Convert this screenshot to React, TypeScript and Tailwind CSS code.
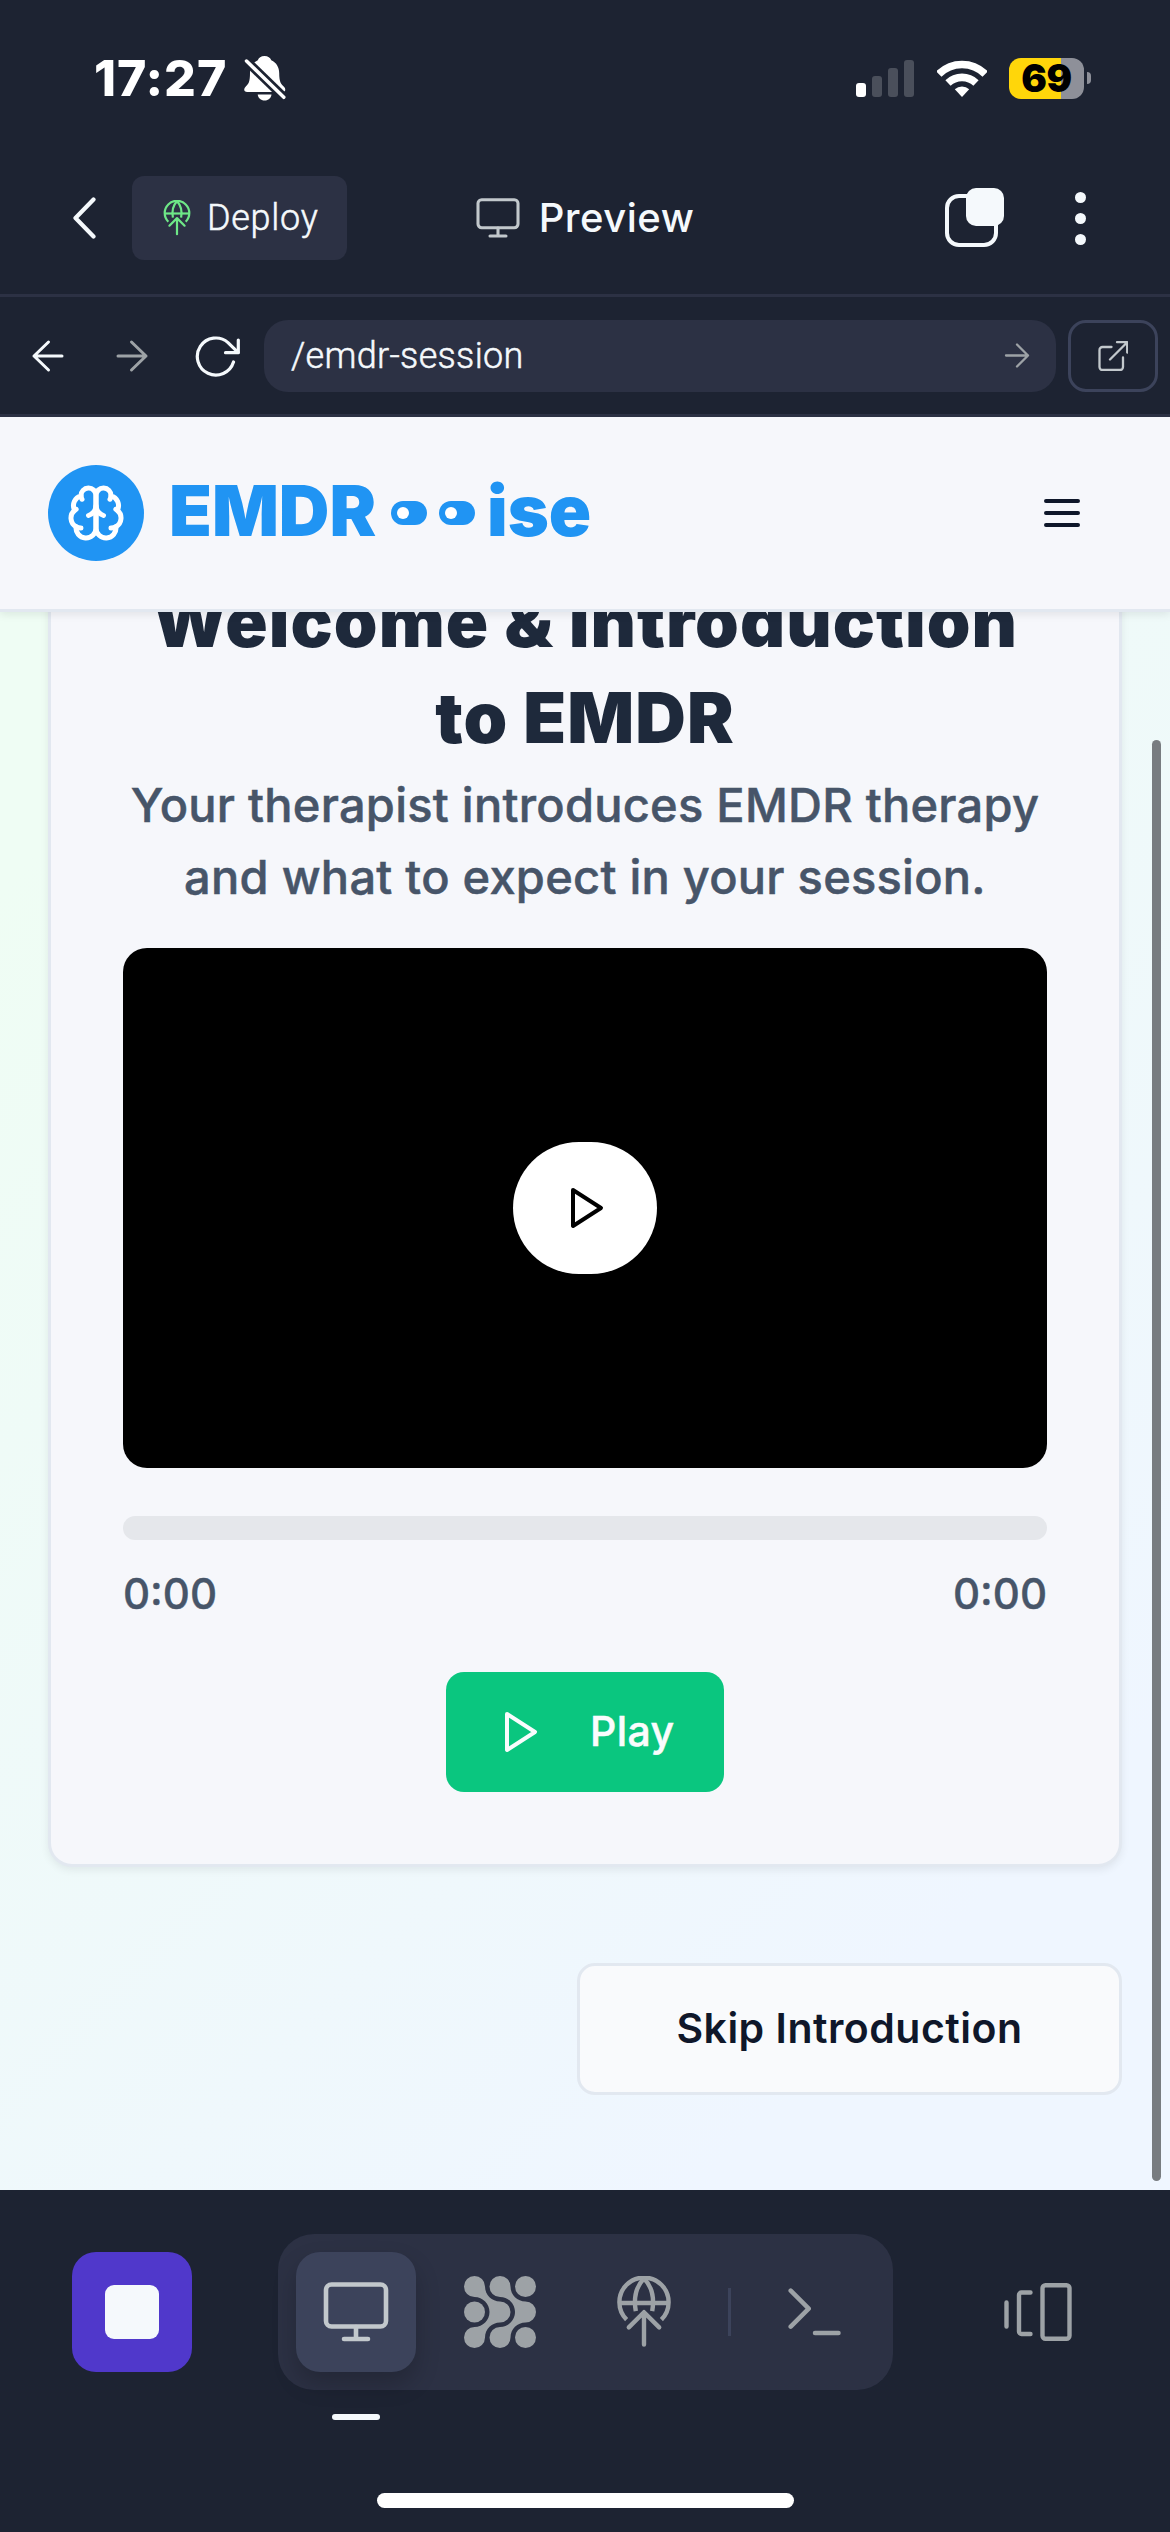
import React from "react";

function GlobeArrow({ className }: { className: string }) {
  return (
    <svg viewBox="0 0 72 72" className={className} fill="none" stroke="currentColor" strokeWidth="4.4" strokeLinecap="round" strokeLinejoin="round">
      <path d="M18.6 43.6A24.6 24.6 0 1 1 53.4 43.6" strokeLinecap="butt" />
      <path d="M11.5 27H60.5" strokeLinecap="butt" />
      <path d="M35.5 3C28 11 25.3 21 27.8 35.2" strokeLinecap="butt" />
      <path d="M36.5 3C44 11 46.7 21 44.2 35.2" strokeLinecap="butt" />
      <path d="M36 68.5V36.5M20.8 51.4L36 36.2L51.2 51.4" />
    </svg>
  );
}

function MonitorIcon({ className }: { className: string }) {
  return (
    <svg viewBox="0 0 66 60" className={className} fill="none" stroke="currentColor" strokeWidth="4.6" strokeLinecap="round" strokeLinejoin="round">
      <rect x="3" y="2.5" width="60" height="42" rx="5.5" />
      <path d="M33 45V57M21 57H45" />
    </svg>
  );
}

function PlayIcon() {
  return (
    <svg viewBox="0 0 24 24" className="size-12" fill="none" stroke="currentColor" strokeWidth="2" strokeLinecap="round" strokeLinejoin="round">
      <polygon points="6 3 20 12 6 21 6 3" />
    </svg>
  );
}

function StatusBar() {
  return (
    <div className="flex h-[142px] items-center pt-[14px] pr-[79px] pl-[94px] text-white">
      <span className="w-[150px] text-[50px] leading-none font-extrabold tracking-[0.9px] whitespace-nowrap">17:27</span>
      <svg viewBox="0 0 42 45" className="h-[45px] w-[42px]">
        <path
          d="M20.5 0C17 0 14.700 2 13.800 4.200C8.700 6.500 6 11.500 6 17C6 26 4.500 28 1.800 30.500C.5 31.800 0 33 .3 34.300C.6 35.500 1.700 36 3 36H38.500C40 36 41 35.300 41.200 34.200C41.400 33 41 31.800 39.700 30.500C37 28 35.200 26 35.200 17C35.200 11.500 32.500 6.500 27.300 4.200C26.300 2 24 0 20.500 0Z"
          fill="currentColor"
        />
        <path d="M13.700 38.500H27.500C27 42 24.500 44.500 20.600 44.500C16.700 44.500 14.200 42 13.700 38.500Z" fill="currentColor" />
        <path d="M2 4.500L40.200 41.500" stroke="#1d2332" strokeWidth="9" />
        <path d="M2.500 5L39.800 41.300" stroke="currentColor" strokeWidth="3.500" strokeLinecap="round" />
      </svg>
      <div className="ml-auto flex items-center">
        <div className="flex h-[37px] items-end gap-[6px]">
          <i className="h-[14px] w-[10px] rounded-[3px] bg-white" />
          <i className="h-[21px] w-[10px] rounded-[3px] bg-[#4a4f5b]" />
          <i className="h-[29px] w-[10px] rounded-[3px] bg-[#4a4f5b]" />
          <i className="h-[37px] w-[10px] rounded-[3px] bg-[#4a4f5b]" />
        </div>
        <svg viewBox="0 0 50 37" className="ml-[23px] h-[37px] w-[50px]" fill="none" stroke="currentColor" strokeWidth="7.6">
          <path d="M1.800 14.100A32.700 32.700 0 0 1 48.200 14.100" />
          <path d="M11 23A20.300 20.300 0 0 1 39 23" />
          <path d="M25 37L17.800 29.300A10.500 10.500 0 0 1 32.200 29.300Z" fill="currentColor" stroke="none" />
        </svg>
        <div className="ml-[22px] flex h-[41px] w-[75px] items-center justify-center rounded-[12px] bg-[linear-gradient(90deg,#ffd60a_70%,#8e9099_70%)]">
          <span className="text-[38px] leading-none font-black tracking-[-0.5px] text-black">69</span>
        </div>
        <i className="ml-[3px] h-[12px] w-[4px] rounded-r-full bg-[#8e9099]" />
      </div>
    </div>
  );
}

function AppBar() {
  return (
    <div className="grid h-[152px] grid-cols-[1fr_auto_1fr] items-center text-[#f5f9fc]">
      <div className="flex items-center pl-[72px]">
        <svg viewBox="0 0 24 42" className="h-[42px] w-6" fill="none" stroke="currentColor" strokeWidth="4.200" strokeLinecap="round" strokeLinejoin="round">
          <path d="M21.500 2.500L3.500 21L21.500 39.500" />
        </svg>
        <div className="ml-9 flex h-[84px] w-[215px] items-center rounded-[12px] bg-[#2c3144] pl-[27px]">
          <GlobeArrow className="size-9 text-[#6ee787]" />
          <span className="ml-[12px] font-['Roboto'] text-[36px] leading-none font-light tracking-[0.7px] [-webkit-text-stroke:0.5px_currentColor]">Deploy</span>
        </div>
      </div>
      <div className="flex items-center">
        <MonitorIcon className="h-10 w-11 text-[#c2c8cc]" />
        <span className="ml-[19px] text-[40px] leading-none font-medium tracking-[0.5px]">Preview</span>
      </div>
      <div className="flex items-center justify-end pr-[84px]">
        <svg viewBox="0 0 60 60" className="mr-[70px] size-[60px]">
          <rect x="2" y="8" width="49" height="49" rx="12" fill="none" stroke="currentColor" strokeWidth="4" />
          <rect x="21" y="0" width="38" height="38" rx="10" fill="currentColor" />
        </svg>
        <div className="flex flex-col gap-[10px]">
          <i className="size-[11px] rounded-full bg-current" />
          <i className="size-[11px] rounded-full bg-current" />
          <i className="size-[11px] rounded-full bg-current" />
        </div>
      </div>
    </div>
  );
}

function AddressBar() {
  return (
    <div className="flex h-[123px] items-center border-y-[3px] border-[#2c3144] pl-[30px] text-[#f5f9fc]">
      <svg viewBox="0 0 36 36" className="size-9" fill="none" stroke="currentColor" strokeWidth="3" strokeLinecap="round" strokeLinejoin="round">
        <path d="M32 18H4M18.500 4L4 18L18.500 32" />
      </svg>
      <svg viewBox="0 0 36 36" className="ml-12 size-9 text-[#9da2a6]" fill="none" stroke="currentColor" strokeWidth="3" strokeLinecap="round" strokeLinejoin="round">
        <path d="M4 18H32M17.500 4L32 18L17.500 32" />
      </svg>
      <svg viewBox="0 0 46 42" className="ml-[45px] h-[42px] w-[46px]" fill="none" stroke="currentColor" strokeWidth="3.200" strokeLinecap="round" strokeLinejoin="round">
        <path d="M38.500 27A18.500 18.500 0 1 1 33 7.600L43 17.400" />
        <path d="M43.300 5V17.700H30.500" />
      </svg>
      <div className="ml-[23px] flex h-[72px] w-[792px] items-center justify-between rounded-[24px] bg-[#2c3144] pr-[26px] pl-[27px]">
        <span className="font-['Roboto'] text-[36px] leading-none font-light tracking-[0.3px] [-webkit-text-stroke:0.5px_currentColor]">/emdr-session</span>
        <svg viewBox="0 0 27 27" className="size-[27px] text-[#9da2a6]" fill="none" stroke="currentColor" strokeWidth="2.300" strokeLinecap="round" strokeLinejoin="round">
          <path d="M3 13.500H25M14 2.500L25 13.500L14 24.500" />
        </svg>
      </div>
      <div className="ml-3 flex h-[72px] w-[90px] items-center justify-center rounded-[18px] border-[3px] border-[#3c435b]">
        <svg viewBox="0 0 30 30" className="size-[30px] text-[#c2c8cc]" fill="none" stroke="currentColor" strokeWidth="2.300" strokeLinecap="round" strokeLinejoin="round">
          <path d="M13.500 6H4.500A3 3 0 0 0 1.500 9V26A3 3 0 0 0 4.500 29H22A3 3 0 0 0 25 26V16.500" />
          <path d="M12 18.500L29 1.500M19 1.200H29.200V11.500" />
        </svg>
      </div>
    </div>
  );
}

function Eye() {
  return (
    <span className="flex h-6 w-9 items-center rounded-full bg-[#2094f3] pl-[6px]">
      <span className="size-3 rounded-full bg-white" />
    </span>
  );
}

function SiteHeader() {
  return (
    <header className="relative z-10 flex h-[195px] shrink-0 items-center border-b-[3px] border-[#e2e8f0] bg-[#f6f7fb] pr-[84px] pl-12 shadow-[0_3px_8px_rgba(0,0,0,0.08)]">
      <div className="flex size-24 items-center justify-center rounded-full bg-[#2094f3]">
        <svg viewBox="0 0 24 24" className="size-[60px] text-white" fill="none" stroke="currentColor" strokeWidth="2" strokeLinecap="round" strokeLinejoin="round">
          <path d="M12 5a3 3 0 1 0-5.997.125 4 4 0 0 0-2.526 5.770 4 4 0 0 0 .556 6.588A4 4 0 1 0 12 18Z" />
          <path d="M12 5a3 3 0 1 1 5.997.125 4 4 0 0 1 2.526 5.770 4 4 0 0 1-.556 6.588A4 4 0 1 1 12 18Z" />
          <path d="M15 13a4.500 4.500 0 0 1-3-4 4.500 4.500 0 0 1-3 4" />
          <path d="M17.599 6.500a3 3 0 0 0 .399-1.375M6.003 5.125A3 3 0 0 0 6.401 6.500" />
          <path d="M3.477 10.896a4 4 0 0 1 .585-.396M19.938 10.500a4 4 0 0 1 .585.396" />
          <path d="M6 18a4 4 0 0 1-1.967-.516M19.967 17.484A4 4 0 0 1 18 18" />
        </svg>
      </div>
      <div className="ml-[25px] flex items-center text-[70px] leading-[92px] font-black tracking-[0px] text-[#2094f3]">
        <span className="w-[218px] pb-1">EMDR</span>
        <span className="ml-[4px] flex gap-3">
          <Eye />
          <Eye />
        </span>
        <span className="ml-[12px] pb-1">ise</span>
      </div>
      <svg viewBox="0 0 36 28" className="mr-1.5 ml-auto h-7 w-9" stroke="#0f172a" strokeWidth="4" strokeLinecap="round">
        <path d="M2 2H34M2 14H34M2 26H34" />
      </svg>
    </header>
  );
}

function SessionPage() {
  return (
    <div className="relative flex h-[1773px] flex-col overflow-hidden bg-[linear-gradient(135deg,#effdf4_16%,#eff6ff_84%)]">
      <SiteHeader />
      <main className="flex flex-col items-end px-12">
        <section className="-mt-[110px] w-full rounded-[24px] border-[3px] border-[#e2e8f0] bg-[#f6f7fb] px-[72px] pt-[69px] pb-[72px] shadow-[0_3px_8px_rgba(0,0,0,0.07)]">
          <h1 className="-mx-6 text-center text-[70px] leading-[96px] font-black tracking-[1.05px] text-[#1e293b]">
            Welcome &amp; Introduction
            <br />
            to EMDR
          </h1>
          <p className="-mx-6 mt-[3px] text-center text-[47px] leading-[72px] font-medium tracking-[0.25px] text-[#475569] [-webkit-text-stroke:0.5px_currentColor]">
            Your therapist introduces EMDR therapy
            <br />
            and what to expect in your session.
          </p>
          <div className="mt-[35px] flex h-[520px] items-center justify-center rounded-[24px] bg-black">
            <button className="flex h-[132px] w-[144px] items-center justify-center rounded-full bg-white text-black">
              <PlayIcon />
            </button>
          </div>
          <div className="mt-12 h-6 rounded-full bg-[#e5e7eb]" />
          <div className="mt-6 flex justify-between text-[42px] leading-[60px] font-medium text-[#475569] [-webkit-text-stroke:0.4px_currentColor]">
            <span>0:00</span>
            <span>0:00</span>
          </div>
          <div className="mt-12 flex justify-center">
            <button className="flex h-[120px] w-[278px] items-center rounded-[18px] bg-[#0ac67f] pl-[49px] text-[41px] font-medium tracking-[0.4px] text-[#fafcfd]">
              <PlayIcon />
              <span className="ml-[47px] [-webkit-text-stroke:0.5px_currentColor]">Play</span>
            </button>
          </div>
        </section>
        <button className="mt-24 h-[132px] w-[545px] rounded-[18px] border-[3px] border-[#e2e8f0] bg-[#f9fafc] text-[41px] font-semibold tracking-[0.5px] text-[#0f172a]">
          Skip Introduction
        </button>
      </main>
      <div className="absolute top-[323px] right-[9px] z-20 h-[1441px] w-[9px] rounded-full bg-[#787c80]" />
    </div>
  );
}

function BottomBar() {
  return (
    <footer className="flex h-[342px] flex-col pt-11">
      <div className="flex h-[156px] items-center pr-[98px] pl-[72px] text-[#9da2a6]">
        <div className="flex size-[120px] items-center justify-center rounded-[24px] bg-[#5038cb]">
          <i className="size-[54px] rounded-[9px] bg-[#f5f9fc]" />
        </div>
        <nav className="ml-[86px] flex h-[156px] items-center gap-6 rounded-[36px] bg-[#2c3144] px-[18px]">
          <div className="flex size-[120px] items-center justify-center rounded-[24px] bg-[#3c435b] shadow-[0_12px_24px_rgba(2,2,3,0.2)]">
            <MonitorIcon className="h-[60px] w-[66px] text-[#c2c8cc]" />
          </div>
          <div className="flex size-[120px] items-center justify-center">
            <svg viewBox="0 0 72 72" className="size-[72px]" fill="currentColor">
              <path d="M21 10.500C21 19 28 25.500 36 25.500A10.500 10.500 0 0 1 36 46.500C28 46.500 21 53 21 61.500A10.500 10.500 0 1 1 10.500 51C19 51 25.500 44 25.500 36C25.500 28 19 21 10.500 21A10.500 10.500 0 1 1 21 10.500Z" />
              <path d="M46.500 10.500C46.500 19 53.500 25.500 61.500 25.500A10.500 10.500 0 0 1 61.500 46.500C53.500 46.500 46.500 53 46.500 61.500A10.500 10.500 0 1 1 36 51C44.500 51 51 44 51 36C51 28 44.500 21 36 21A10.500 10.500 0 1 1 46.500 10.500Z" />
              <circle cx="10.500" cy="36" r="10.500" />
              <circle cx="61.500" cy="10.500" r="10.500" />
              <circle cx="61.500" cy="61.500" r="10.500" />
            </svg>
          </div>
          <div className="flex size-[120px] items-center justify-center">
            <GlobeArrow className="size-[72px]" />
          </div>
          <i className="h-12 w-[3px] bg-[#3c435b]" />
          <div className="flex size-[120px] items-center justify-center">
            <svg viewBox="0 0 54 48" className="h-12 w-[54px]" fill="none" stroke="currentColor" strokeWidth="4.500" strokeLinecap="round" strokeLinejoin="round">
              <path d="M2.700 2.700L20.700 20.700L2.700 38.700M27 45H50.500" />
            </svg>
          </div>
        </nav>
        <svg viewBox="0 0 68 58" className="ml-auto h-[58px] w-[68px]" fill="none" stroke="currentColor" strokeWidth="4.400" strokeLinecap="round" strokeLinejoin="round">
          <path d="M2.500 19.500V43.500M26.500 9.500H17.500A2.500 2.500 0 0 0 15 12V48.500A2.500 2.500 0 0 0 17.500 51H26.500" />
          <rect x="38.500" y="2.300" width="27" height="53.500" rx="3" />
        </svg>
      </div>
      <i className="mt-6 ml-[332px] h-1.5 w-12 shrink-0 rounded-full bg-[#f5f9fc]" />
      <i className="mt-[73px] h-[15px] w-[417px] self-center rounded-full bg-white" />
    </footer>
  );
}

export default function App() {
  return (
    <div className="h-[2532px] w-[1170px] overflow-hidden bg-[#1d2332] font-['Inter',sans-serif]">
      <StatusBar />
      <AppBar />
      <AddressBar />
      <SessionPage />
      <BottomBar />
    </div>
  );
}
